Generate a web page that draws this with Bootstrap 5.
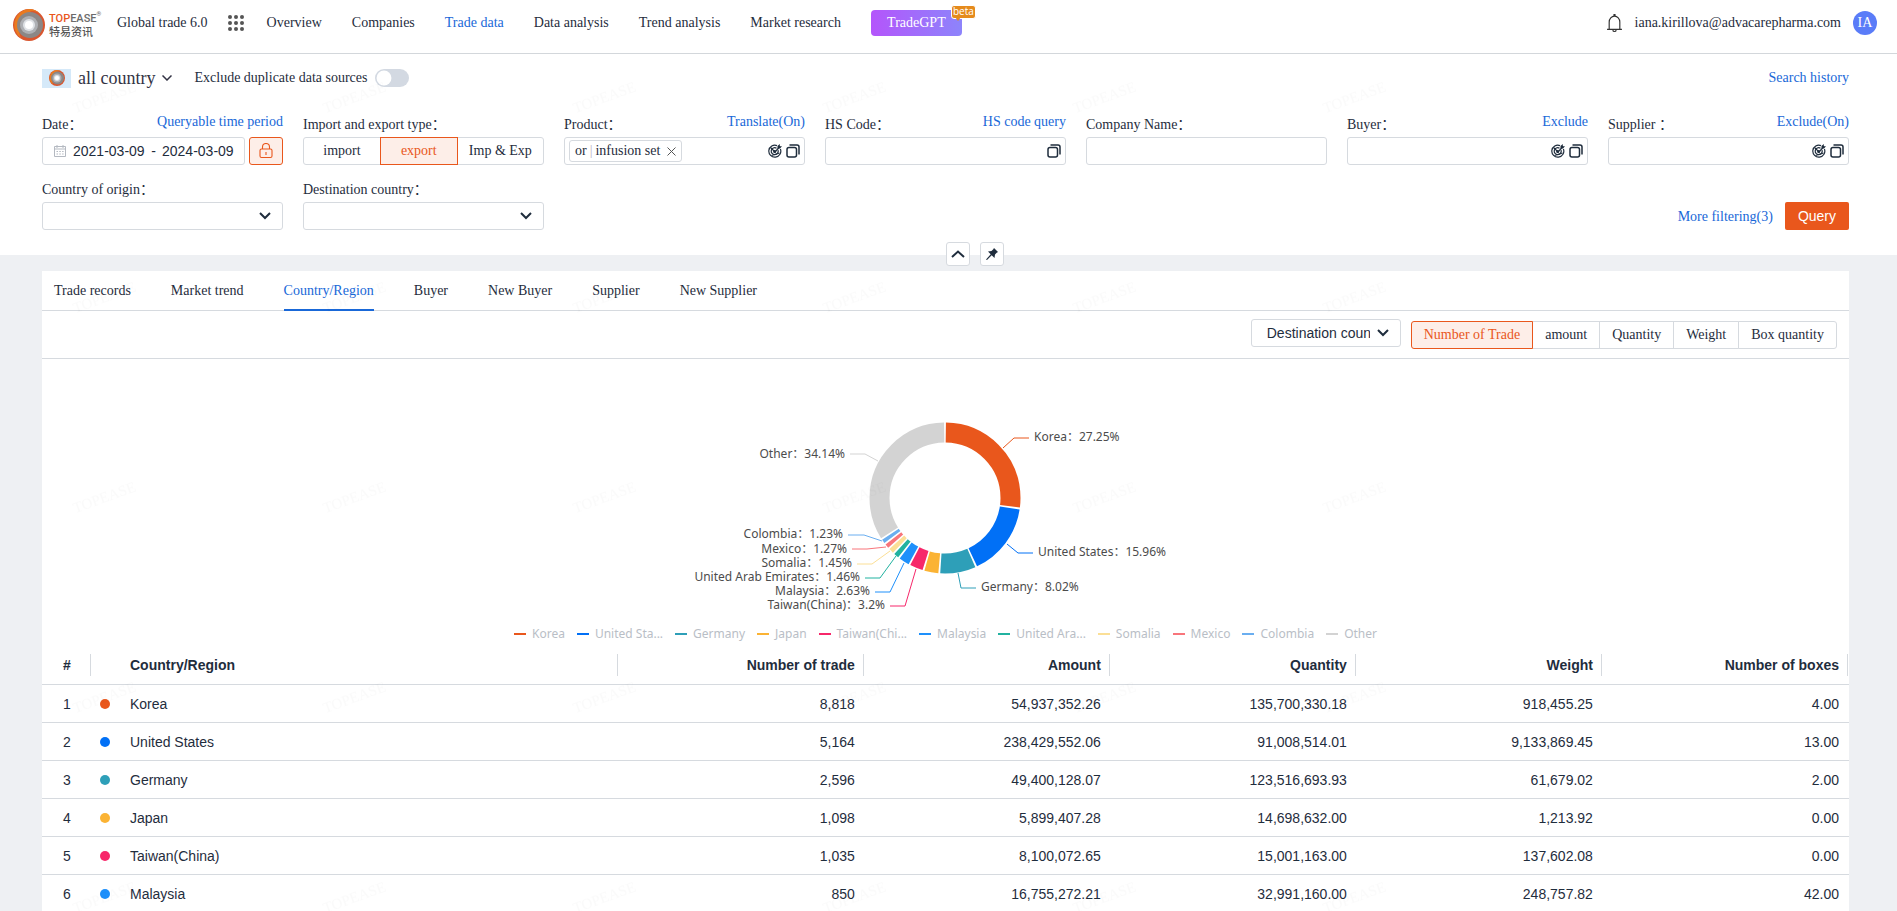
<!DOCTYPE html>
<html lang="en">
<head>
<meta charset="utf-8">
<meta name="viewport" content="width=device-width, initial-scale=1">
<title>Global trade 6.0</title>
<link href="https://cdn.jsdelivr.net/npm/bootstrap@5.3.0/dist/css/bootstrap.min.css" rel="stylesheet">
<style>
  :root { --ink:#1f2d3d; --line:#d6dadf; --brand:#e9571c; --link:#1968d8; --soft:#fdeee8; }
  body { font:14px/20px "Liberation Serif","Noto Sans CJK SC",serif; color:var(--ink); background:#eef0f3; overflow-x:hidden; }
  a { color:var(--link); text-decoration:none; }
  .sans { font-family:"Liberation Sans","Noto Sans CJK SC",sans-serif; }
  svg { display:block; flex:none; }

  .topbar { height:54px; border-bottom:1px solid #d3d7db; padding:0 20px 16px 13px; }
  .topbar nav a { color:var(--ink); }
  .topbar nav a.active { color:var(--link); }
  .topbar nav { margin-left:16px; gap:20px; }
  .topnav { gap:30px; margin-left:3px; }
  .account { gap:12px; }
  .brand-text { line-height:12px; color:#6b6b6b; width:52px; white-space:nowrap; }
  .brand-name { font:500 11px/12px Roboto,sans-serif; }
  .brand-name span { color:var(--brand); }
  .brand-cn { font:500 11px/12px "Noto Sans CJK SC",sans-serif; color:#555; }
  .brand-name sup { font-size:6px; font-weight:400; top:-6px; }
  .gpt { width:91px; height:26px; border:0; border-radius:4px; color:#fff; background:linear-gradient(90deg,#b455fb,#8d84fb); }
  .beta { left:80px; top:-5px; width:25px; height:14px; border:1px solid #fff; border-radius:3px; background:#e58a1c; color:#fff; font:10px/11px "Open Sans",sans-serif; text-align:center; }
  .beta::after { content:""; position:absolute; left:3px; top:11px; border:3px solid transparent; border-top:4px solid #e58a1c; border-bottom:0; }
  .avatar { width:24px; height:24px; border-radius:50%; background:#5a7cf8; color:#fff; line-height:24px; }

  .filters { padding:10px 48px 25px 42px; }
  .source-btn { border:0; padding:0; gap:7px; background:none; font-size:18px; line-height:28px; color:#334; }
  .flag { width:29px; height:19px; background:#d5e9f9; }
  .dedupe { padding-left:22px; }
  .filters .form-switch .form-check-input { width:34px; height:18px; margin:0; border:0; float:none; background-color:#d3d9e2;
    background-image:url("data:image/svg+xml,%3Csvg xmlns='http://www.w3.org/2000/svg' viewBox='-4 -4 8 8'%3E%3Ccircle r='3.3' fill='%23fff'/%3E%3C/svg%3E"); }
  .field-grid { display:grid; grid-template-columns:repeat(7,minmax(0,1fr)); gap:13px 20px; margin-top:21px; }
  .field-head { height:24px; display:flex; align-items:flex-end; justify-content:space-between; white-space:nowrap; }
  .field-head label, .field-head .caption { line-height:18px; padding-bottom:3px; }
  .field-head a { line-height:16px; padding-bottom:7px; }
  .actions { grid-column:3 / -1; }
  .box, .form-select { height:28px; border:1px solid var(--line); border-radius:3px; background-color:#fff; }
  .box { display:flex; align-items:center; }
  .box input { border:0; outline:0; min-width:0; padding:0; background:none; color:var(--ink); height:24px; }
  .box .icon-btn { border:0; background:none; padding:0; color:var(--ink); }
  .form-select { font:14px/20px "Liberation Sans",sans-serif; color:var(--ink); padding:3px 30px 3px 15px;
    background-image:url("data:image/svg+xml,%3Csvg xmlns='http://www.w3.org/2000/svg' viewBox='0 0 12 8'%3E%3Cpath fill='none' stroke='%231f2d3d' stroke-width='2' d='M1 1l5 5 5-5'/%3E%3C/svg%3E");
    background-size:12px 8px; background-position:right 11px center; }
  .date-box { padding:0 10px; }
  .date-box svg { margin:0 7px 0 1px; }
  .date-box input { width:72px; }
  .lock { width:34px; height:28px; padding:0; border:1px solid var(--brand); border-radius:3px; background:var(--soft); color:var(--brand); }
  .seg label.btn { font-size:14px; line-height:20px; height:28px; padding:3px 0; color:var(--ink); border:1px solid var(--line); border-radius:3px; background:#fff; }
  .seg .btn-check:checked + label.btn { color:var(--brand); background:var(--soft); border-color:var(--brand); z-index:2; }
  .kind label.btn { flex:8 1 0; }
  .kind label.btn:last-child { flex-grow:9; }
  .metric { margin-top:2px; }
  .metric label.btn { padding:3px 12px; }
  .tag { height:22px; border:1px solid var(--line); border-radius:3px; padding:0 5px; line-height:20px; margin-left:4px; gap:3px; }
  .tag .bar { color:#bdb3c4; }
  .tag .icon-btn { margin-left:4px; }
  .more { margin-right:4px; padding-bottom:3px; }
  .query { height:28px; padding:0 13px; border:0; border-radius:2px; background:var(--brand); color:#fff; font-size:14px; }
  .pin-anchor { margin:0 48px 0 42px; }
  .pins { left:50%; top:-1px; gap:10px; transform:translateY(-50%); z-index:3; }
  .pin-btn { width:24px; height:24px; padding:0; color:var(--ink); border:1px solid var(--line); border-radius:3px; background:#fff; }

  .panel { margin:16px 48px 0 42px; background:#fff; }
  .tabs { height:40px; gap:40px; padding:0 12px; border-bottom:1px solid var(--line); }
  .tabs a { color:var(--ink); line-height:40px; height:40px; border-bottom:2px solid transparent; }
  .tabs a.active { color:var(--link); border-color:var(--link); }
  .chart-bar { height:48px; padding:8px 12px 0 0; gap:10px; border-bottom:1px solid var(--line); }
  .chart-bar .form-select { width:150px; }
  .chart text, .legend { font-family:"Noto Sans","Noto Sans CJK SC",sans-serif; font-size:12px; }
  .chart text { fill:#4c4c4c; }
  .chart polyline { fill:none; stroke-width:1; }
  .legend { gap:12px; height:25px; line-height:25px; color:#b9bec6; white-space:nowrap; }
  .legend span { display:flex; align-items:center; gap:6px; }
  .legend i { width:12px; height:2px; background:var(--c); }

  .data { table-layout:fixed; width:100%; margin:0; font-size:14px; line-height:20px; color:var(--ink); }
  .data th, .data td { height:38px; padding:8px 10px; border-bottom:1px solid var(--line); text-align:right; white-space:nowrap; }
  .data th { padding-top:9px; padding-bottom:9px; background:linear-gradient(var(--line),var(--line)) right 1px center/1px 22px no-repeat; }
  .data th:nth-child(2) { background:none; }
  .data td:first-child, .data th:first-child, .data td:nth-child(2) { text-align:center; }
  .data td:nth-child(2) { padding:8px; }
  .data td:nth-child(3), .data th:nth-child(3) { text-align:left; }
  .dot { display:block; width:10px; height:10px; border-radius:50%; background:var(--c); }
  .wm { left:0; top:0; width:80%; height:100%; pointer-events:none; z-index:5; }
</style>
</head>
<body>

<svg width="0" height="0" class="position-absolute" aria-hidden="true">
  <defs>
    <symbol id="ring" viewBox="0 0 32 32">
      <circle cx="16" cy="16" r="16" fill="#d9562f"/>
      <path d="M16 0A16 16 0 0 0 8 29Q3 18 11 8T27 5Q23 0 16 0" fill="#ea7a1f"/>
      <circle cx="17" cy="16" r="13" fill="#8b8786"/>
      <circle cx="16" cy="16" r="9" fill="#aeb0b4"/>
      <circle cx="16" cy="16" r="6" fill="#dfe2e6"/>
      <circle cx="16" cy="16" r="4" fill="#fff"/>
    </symbol>
    <symbol id="copy" viewBox="0 0 14 14">
      <rect x="1" y="3.5" width="9.5" height="9.5" rx="2" fill="none" stroke="currentColor" stroke-width="1.5"/>
      <path d="M3.5 1H11a2 2 0 0 1 2 2v7.500" fill="none" stroke="currentColor" stroke-width="1.5"/>
    </symbol>
    <symbol id="target" viewBox="0 0 14 14">
      <g fill="none" stroke="currentColor" stroke-width="1.200">
        <path d="M9 1.600A6 6 0 1 0 12.400 5"/><path d="M8.500 4.200A3.500 3.500 0 1 0 10 6"/><path d="M2.500 3.500l4.500 4.500 5-5.500M3.500 11.500l8-2.500"/><circle cx="6.700" cy="7.500" r="1"/>
      </g>
      <path d="M9.500 4.500V2L11.800 0v2.200H14L12 4.500z" fill="currentColor"/>
    </symbol>
  </defs>
</svg>

<div class="bg-white">
<header class="topbar d-flex align-items-center">
  <a href="#" class="d-flex align-items-center gap-1 pt-2 mt-1" aria-label="Topease">
    <svg width="32" height="32"><use href="#ring"/></svg>
    <span class="brand-text"><span class="brand-name d-block"><span>TOP</span>EASE<sup>®</sup></span><span class="brand-cn d-block">特易资讯</span></span>
  </a>
  <nav class="d-flex align-items-center flex-grow-1 pt-2">
    <a href="#">Global trade 6.0</a>
    <svg width="16" height="16" viewBox="0 0 16 16" fill="#555"><g id="dots"><circle cx="2" cy="2" r="2"/><circle cx="8" cy="2" r="2"/><circle cx="14" cy="2" r="2"/></g><use href="#dots" y="6"/><use href="#dots" y="12"/></svg>
    <div class="topnav d-flex align-items-center">
      <a href="#">Overview</a>
      <a href="#">Companies</a>
      <a href="#" class="active">Trade data</a>
      <a href="#">Data analysis</a>
      <a href="#">Trend analysis</a>
      <a href="#">Market research</a>
      <span class="position-relative"><button type="button" class="gpt">TradeGPT</button><span class="beta position-absolute">beta</span></span>
    </div>
  </nav>
  <div class="account d-flex align-items-center pt-2">
    <svg width="17" height="20" viewBox="0 0 16 18" fill="none" stroke="#333" stroke-width="1.100"><path d="M1 15h14M3 15V8a5 5.500 0 0 1 10 0v7M6.500 15.500a1.500 1.500 0 0 0 3 0"/><path d="M8 .5v2" stroke-width="2"/></svg>
    <span>iana.kirillova@advacarepharma.com</span>
    <span class="avatar text-center">IA</span>
  </div>
</header>

<section class="filters">
  <div class="d-flex align-items-center">
    <button type="button" class="source-btn d-flex align-items-center">
      <span class="flag d-flex align-items-center justify-content-center"><svg width="16" height="16"><use href="#ring"/></svg></span>all country
      <svg width="10" height="6" viewBox="0 0 10 6" fill="none" stroke="#334" stroke-width="1.500"><path d="M.5.5L5 5 9.500.5"/></svg>
    </button>
    <div class="dedupe form-switch d-flex align-items-center gap-2">
      <label for="dedupe">Exclude duplicate data sources</label>
      <input class="form-check-input" type="checkbox" role="switch" id="dedupe">
    </div>
    <a href="#" class="ms-auto">Search history</a>
  </div>

  <form class="field-grid" onsubmit="return false">
    <div>
      <div class="field-head"><label for="from">Date：</label><a href="#">Queryable time period</a></div>
      <div class="d-flex gap-1">
        <div class="box date-box flex-grow-1 sans">
          <svg width="12" height="12" viewBox="0 0 12 12" fill="none" stroke="#b4b9c1"><path d="M.5 1.500h11v10H.5zM.5 4h11M3 0v3M9 0v3M2.500 6.500h1.500m1.300 0h1.500m1.300 0h1.500M2.500 9h1.500m1.300 0h1.500m1.300 0h1.500"/></svg>
          <input id="from" type="text" value="2021-03-09">
          <span class="flex-grow-1 text-center">-</span>
          <input type="text" aria-label="End date" value="2024-03-09">
        </div>
        <button type="button" class="lock d-flex align-items-center justify-content-center" aria-label="Lock period"><svg width="14" height="16" viewBox="0 0 14 16" fill="none" stroke="currentColor" stroke-width="1.100"><rect x="1" y="6" width="12" height="8.500" rx="1.500"/><path d="M3.500 6V4a3.500 3.500 0 0 1 7 0v2M7 9v3"/></svg></button>
      </div>
    </div>
    <div>
      <div class="field-head"><span class="caption">Import and export type：</span></div>
      <div class="btn-group seg kind d-flex" role="group" aria-label="Import and export type">
        <input type="radio" class="btn-check" name="kind" id="k1"><label class="btn" for="k1">import</label>
        <input type="radio" class="btn-check" name="kind" id="k2" checked><label class="btn" for="k2">export</label>
        <input type="radio" class="btn-check" name="kind" id="k3"><label class="btn" for="k3">Imp &amp; Exp</label>
      </div>
    </div>
    <div>
      <div class="field-head"><label for="product">Product：</label><a href="#">Translate(On)</a></div>
      <div class="box pe-1">
        <span class="tag d-flex align-items-center flex-shrink-0"><span>or</span><span class="bar">|</span><span>infusion set</span>
          <button type="button" class="icon-btn" aria-label="Remove"><svg width="9" height="9" viewBox="0 0 9 9" stroke="#555"><path d="M.5.5l8 8M8.500.5l-8 8"/></svg></button></span>
        <input id="product" type="text" class="flex-grow-1">
        <button type="button" class="icon-btn" aria-label="Match"><svg width="14" height="14"><use href="#target"/></svg></button>
        <button type="button" class="icon-btn ms-1" aria-label="Batch"><svg width="14" height="14"><use href="#copy"/></svg></button>
      </div>
    </div>
    <div>
      <div class="field-head"><label for="hs">HS Code：</label><a href="#">HS code query</a></div>
      <div class="box pe-1"><input id="hs" type="text" class="flex-grow-1">
        <button type="button" class="icon-btn" aria-label="Batch"><svg width="14" height="14"><use href="#copy"/></svg></button></div>
    </div>
    <div>
      <div class="field-head"><label for="company">Company Name：</label></div>
      <div class="box"><input id="company" type="text" class="flex-grow-1"></div>
    </div>
    <div>
      <div class="field-head"><label for="buyer">Buyer：</label><a href="#">Exclude</a></div>
      <div class="box pe-1"><input id="buyer" type="text" class="flex-grow-1">
        <button type="button" class="icon-btn" aria-label="Match"><svg width="14" height="14"><use href="#target"/></svg></button>
        <button type="button" class="icon-btn ms-1" aria-label="Batch"><svg width="14" height="14"><use href="#copy"/></svg></button></div>
    </div>
    <div>
      <div class="field-head"><label for="supplier">Supplier ：</label><a href="#">Exclude(On)</a></div>
      <div class="box pe-1"><input id="supplier" type="text" class="flex-grow-1">
        <button type="button" class="icon-btn" aria-label="Match"><svg width="14" height="14"><use href="#target"/></svg></button>
        <button type="button" class="icon-btn ms-1" aria-label="Batch"><svg width="14" height="14"><use href="#copy"/></svg></button></div>
    </div>
    <div>
      <div class="field-head"><label for="origin">Country of origin：</label></div>
      <select id="origin" class="form-select"><option></option></select>
    </div>
    <div>
      <div class="field-head"><label for="dest">Destination country：</label></div>
      <select id="dest" class="form-select"><option></option></select>
    </div>
    <div class="actions d-flex align-items-end justify-content-end gap-2">
      <a href="#" class="more">More filtering(3)</a>
      <button type="submit" class="query sans">Query</button>
    </div>
  </form>
</section>
</div>

<div class="pin-anchor position-relative">
  <div class="pins position-absolute d-flex">
    <button type="button" class="pin-btn d-flex align-items-center justify-content-center" aria-label="Collapse"><svg width="14" height="8" viewBox="0 0 14 8" fill="none" stroke="currentColor" stroke-width="2"><path d="M1 7l6-5.500L13 7"/></svg></button>
    <button type="button" class="pin-btn d-flex align-items-center justify-content-center" aria-label="Pin"><svg width="12" height="12" viewBox="0 0 12 12" fill="currentColor"><path d="M8 0l4 4-1.300.7L9 6.500 8.500 10 5.700 7.200 1 12 0 11.500 4.700 6.300 2 3.500 5.500 3 7.300 1.300z"/></svg></button>
  </div>
</div>

<main class="panel">
  <nav class="tabs d-flex">
    <a href="#">Trade records</a><a href="#">Market trend</a><a href="#" class="active">Country/Region</a><a href="#">Buyer</a><a href="#">New Buyer</a><a href="#">Supplier</a><a href="#">New Supplier</a>
  </nav>
  <div class="chart-bar d-flex align-items-start justify-content-end">
    <select class="form-select" aria-label="Group by"><option>Destination country</option></select>
    <div class="btn-group seg metric" role="group" aria-label="Metric">
      <input type="radio" class="btn-check" name="metric" id="m1" checked><label class="btn" for="m1">Number of Trade</label>
      <input type="radio" class="btn-check" name="metric" id="m2"><label class="btn" for="m2">amount</label>
      <input type="radio" class="btn-check" name="metric" id="m3"><label class="btn" for="m3">Quantity</label>
      <input type="radio" class="btn-check" name="metric" id="m4"><label class="btn" for="m4">Weight</label>
      <input type="radio" class="btn-check" name="metric" id="m5"><label class="btn" for="m5">Box quantity</label>
    </div>
  </div>

  <svg class="chart mx-auto" width="600" height="262" viewBox="-299 -139 600 262" role="img" aria-label="Share of trades by country">
    <!-- ring slices, measured in percent of the circle, clockwise from the top -->
    <g fill="none" stroke-width="20" transform="rotate(-90)">
      <circle r="65.500" pathLength="100" stroke="#e9571c" stroke-dasharray="26.850 100" stroke-dashoffset="-0.200"/>
      <circle r="65.500" pathLength="100" stroke="#0170f6" stroke-dasharray="15.560 100" stroke-dashoffset="-27.450"/>
      <circle r="65.500" pathLength="100" stroke="#2e9fb8" stroke-dasharray="7.620 100" stroke-dashoffset="-43.410"/>
      <circle r="65.500" pathLength="100" stroke="#fbb334" stroke-dasharray="2.990 100" stroke-dashoffset="-51.430"/>
      <circle r="65.500" pathLength="100" stroke="#f7276a" stroke-dasharray="2.800 100" stroke-dashoffset="-54.820"/>
      <circle r="65.500" pathLength="100" stroke="#1e90fb" stroke-dasharray="2.230 100" stroke-dashoffset="-58.020"/>
      <circle r="65.500" pathLength="100" stroke="#21b2a0" stroke-dasharray="1.060 100" stroke-dashoffset="-60.650"/>
      <circle r="65.500" pathLength="100" stroke="#fbdf96" stroke-dasharray="1.050 100" stroke-dashoffset="-62.110"/>
      <circle r="65.500" pathLength="100" stroke="#f8757b" stroke-dasharray="0.870 100" stroke-dashoffset="-63.560"/>
      <circle r="65.500" pathLength="100" stroke="#6aaef0" stroke-dasharray="0.830 100" stroke-dashoffset="-64.830"/>
      <circle r="65.500" pathLength="100" stroke="#d3d3d3" stroke-dasharray="33.740 100" stroke-dashoffset="-66.060"/>
    </g>
    <polyline stroke="#e9571c" points="58,-50 69,-60 84,-60"/><text x="89" y="-57">Korea：27.25%</text>
    <polyline stroke="#0170f6" points="62,46 73,55 88,55"/><text x="93" y="58">United States：15.96%</text>
    <polyline stroke="#2e9fb8" points="13,75 16,90 31,90"/><text x="36" y="93">Germany：8.02%</text>
    <g text-anchor="end">
      <polyline stroke="#f7276a" points="-29,71 -40,108 -55,108"/><text x="-60" y="111">Taiwan(China)：3.2%</text>
      <polyline stroke="#1e90fb" points="-41,65 -55,94 -70,94"/><text x="-75" y="97">Malaysia：2.63%</text>
      <polyline stroke="#21b2a0" points="-49,58 -65,80 -80,80"/><text x="-85" y="83">United Arab Emirates：1.46%</text>
      <polyline stroke="#fbdf96" points="-55,53 -73,66 -88,66"/><text x="-93" y="69">Somalia：1.45%</text>
      <polyline stroke="#f8757b" points="-59,49 -78,51 -93,51"/><text x="-98" y="55">Mexico：1.27%</text>
      <polyline stroke="#6aaef0" points="-63,43 -81,37 -97,37"/><text x="-102" y="40">Colombia：1.23%</text>
      <polyline stroke="#d3d3d3" points="-67,-37 -80,-44 -95,-44"/><text x="-100" y="-40">Other：34.14%</text>
    </g>
  </svg>
  <div class="legend d-flex justify-content-center">
    <span><i style="--c:#e9571c"></i>Korea</span><span><i style="--c:#0170f6"></i>United Sta...</span><span><i style="--c:#2e9fb8"></i>Germany</span><span><i style="--c:#fbb334"></i>Japan</span><span><i style="--c:#f7276a"></i>Taiwan(Chi...</span><span><i style="--c:#1e90fb"></i>Malaysia</span><span><i style="--c:#21b2a0"></i>United Ara...</span><span><i style="--c:#fbdf96"></i>Somalia</span><span><i style="--c:#f8757b"></i>Mexico</span><span><i style="--c:#6aaef0"></i>Colombia</span><span><i style="--c:#d3d3d3"></i>Other</span>
  </div>

  <table class="data sans">
    <colgroup><col style="width:50px"><col style="width:28px"><col style="width:27.600%"><col><col><col><col><col></colgroup>
    <thead><tr><th>#</th><th></th><th>Country/Region</th><th>Number of trade</th><th>Amount</th><th>Quantity</th><th>Weight</th><th>Number of boxes</th></tr></thead>
    <tbody>
      <tr><td>1</td><td><span class="dot" style="--c:#e9571c"></span></td><td>Korea</td><td>8,818</td><td>54,937,352.26</td><td>135,700,330.18</td><td>918,455.25</td><td>4.00</td></tr>
      <tr><td>2</td><td><span class="dot" style="--c:#0170f6"></span></td><td>United States</td><td>5,164</td><td>238,429,552.06</td><td>91,008,514.01</td><td>9,133,869.45</td><td>13.00</td></tr>
      <tr><td>3</td><td><span class="dot" style="--c:#2e9fb8"></span></td><td>Germany</td><td>2,596</td><td>49,400,128.07</td><td>123,516,693.93</td><td>61,679.02</td><td>2.00</td></tr>
      <tr><td>4</td><td><span class="dot" style="--c:#fbb334"></span></td><td>Japan</td><td>1,098</td><td>5,899,407.28</td><td>14,698,632.00</td><td>1,213.92</td><td>0.00</td></tr>
      <tr><td>5</td><td><span class="dot" style="--c:#f7276a"></span></td><td>Taiwan(China)</td><td>1,035</td><td>8,100,072.65</td><td>15,001,163.00</td><td>137,602.08</td><td>0.00</td></tr>
      <tr><td>6</td><td><span class="dot" style="--c:#1e90fb"></span></td><td>Malaysia</td><td>850</td><td>16,755,272.21</td><td>32,991,160.00</td><td>248,757.82</td><td>42.00</td></tr>
    </tbody>
  </table>
</main>

<svg class="wm position-fixed" aria-hidden="true">
  <defs><pattern id="wmp" width="250" height="200" patternUnits="userSpaceOnUse"><text transform="translate(106 102) rotate(-20)" text-anchor="middle" font-size="15" fill="#000" fill-opacity=".02" font-family="Liberation Serif, serif">TOPEASE</text></pattern></defs>
  <rect width="100%" height="100%" fill="url(#wmp)"/>
</svg>
<script src="https://cdn.jsdelivr.net/npm/bootstrap@5.3.0/dist/js/bootstrap.bundle.min.js"></script>
</body>
</html>
